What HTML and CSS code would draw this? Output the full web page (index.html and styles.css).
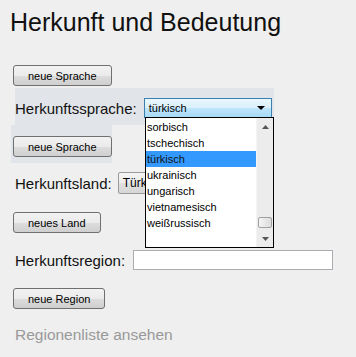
FILE: index.html
```html
<!DOCTYPE html>
<html lang="de">
<head>
    <meta charset="UTF-8">
    <meta name="viewport" content="width=device-width, initial-scale=1.0">
    <title>Herkunft und Bedeutung</title>
    <link rel="stylesheet" href="styles.css">
</head>
<body>
    <div class="page">
        <h1>Herkunft und Bedeutung</h1>

        <button class="btn btn-first">neue Sprache</button>

        <div class="row row-lang hl">
            <label class="lbl">Herkunftssprache:</label>
            <div class="select-box active">
                <span>türkisch</span>
                <svg class="arrow" width="8" height="4" viewBox="0 0 8 4"><polygon points="0,0 8,0 4,4" fill="#000"/></svg>
            </div>
        </div>

        <div class="btn-wrap hl">
            <button class="btn">neue Sprache</button>
        </div>

        <div class="row row-land">
            <label class="lbl">Herkunftsland:</label>
            <div class="select-box plain">
                <span>Türkei</span>
            </div>
        </div>

        <button class="btn btn-gap">neues Land</button>

        <div class="row row-region">
            <label class="lbl">Herkunftsregion:</label>
            <input type="text" class="text-input">
        </div>

        <button class="btn btn-gap">neue Region</button>

        <a href="#" class="list-link">Regionenliste ansehen</a>

        <!-- aufgeklappte Liste der Sprachen -->
        <div class="dropdown">
            <ul class="options">
                <li>sorbisch</li>
                <li>tschechisch</li>
                <li class="selected">türkisch</li>
                <li>ukrainisch</li>
                <li>ungarisch</li>
                <li>vietnamesisch</li>
                <li>weißrussisch</li>
            </ul>
            <div class="scrollbar">
                <div class="sb-up"><svg width="7" height="4" viewBox="0 0 7 4"><polygon points="0,4 7,4 3.5,0" fill="#555"/></svg></div>
                <div class="sb-track"><div class="sb-thumb"></div></div>
                <div class="sb-down"><svg width="7" height="4" viewBox="0 0 7 4"><polygon points="0,0 7,0 3.5,4" fill="#555"/></svg></div>
            </div>
        </div>
    </div>
</body>
</html>
```

FILE: styles.css
```css
* {
    margin: 0;
    padding: 0;
    box-sizing: border-box;
}

body {
    background-color: #efefef;
    color: #000;
    font-family: 'Liberation Sans', Arial, sans-serif;
}

.page {
    position: relative;
    display: flex;
    flex-direction: column;
    align-items: flex-start;
    padding-left: 13px;
    height: 357px;
}

h1 {
    font-size: 25px;
    font-weight: normal;
    line-height: 29px;
    margin: 8px 0 0 -3px;
    color: #111;
}

.btn {
    font-family: 'Liberation Sans', Tahoma, sans-serif;
    font-size: 11px;
    color: #000;
    height: 21px;
    padding: 0 14px;
    border: 1px solid #707070;
    border-radius: 3px;
    background: linear-gradient(to bottom, #f2f2f2 0%, #ebebeb 50%, #dddddd 51%, #cfcfcf 100%);
    cursor: pointer;
}

.btn-first {
    margin-top: 28px;
}

.btn-gap {
    margin-top: 18px;
}

.hl {
    background-color: #e1e5ea;
}

.row {
    display: flex;
    align-items: center;
}

.lbl {
    font-size: 15px;
    line-height: 17px;
    color: #111;
}

.row-lang {
    margin: 2px 0 0 2px;
    width: 259px;
    height: 37px;
    padding-top: 3px;
    gap: 7px;
}

.btn-wrap {
    margin-left: -2px;
    width: 101px;
    height: 38px;
    padding: 11px 0 0 2px;
}

.row-land {
    margin: 9px 0 0 2px;
    height: 22px;
    gap: 6px;
}

.row-region {
    margin: 17px 0 0 2px;
    height: 20px;
    gap: 8px;
}

.select-box {
    display: flex;
    align-items: center;
    justify-content: space-between;
    font-family: 'Liberation Sans', Tahoma, sans-serif;
    font-size: 11px;
}

.select-box.active {
    width: 128px;
    height: 20px;
    padding: 0 6px 0 4px;
    border: 1px solid #3c7fb1;
    background: linear-gradient(to bottom, #eaf6fd 0%, #d9f0fc 50%, #bee6fd 51%, #a7d9f5 100%);
}

.select-box.plain {
    width: 100px;
    height: 22px;
    padding: 0 4px;
    border: 1px solid #9a9a9a;
    border-radius: 2px;
    background: linear-gradient(to bottom, #f4f4f4 0%, #ececec 50%, #e0e0e0 51%, #d6d6d6 100%);
    font-size: 12px;
}

.text-input {
    width: 200px;
    height: 20px;
    border: 1px solid #abadb3;
    background-color: #fff;
}

.list-link {
    margin: 17px 0 0 2px;
    font-size: 15.5px;
    line-height: 18px;
    color: #999;
    text-decoration: none;
}

/* aufgeklappte Auswahlliste */
.dropdown {
    position: absolute;
    left: 145px;
    top: 117px;
    width: 129px;
    height: 131px;
    display: flex;
    border: 1px solid #000;
    background-color: #fff;
}

.options {
    flex: 1;
    list-style: none;
    padding-top: 1px;
    font-family: 'Liberation Sans', Tahoma, sans-serif;
    font-size: 11px;
}

.options li {
    height: 16px;
    line-height: 16px;
    padding-left: 1px;
}

.options li.selected {
    background-color: #3399ff;
    color: #111;
}

.scrollbar {
    width: 17px;
    display: flex;
    flex-direction: column;
    background-color: #ececec;
    border-left: 1px solid #f4f4f4;
}

.sb-up,
.sb-down {
    height: 17px;
    display: flex;
    align-items: center;
    justify-content: center;
}

.sb-track {
    flex: 1;
    display: flex;
    flex-direction: column;
    justify-content: flex-end;
    padding-bottom: 2px;
}

.sb-thumb {
    height: 11px;
    margin: 0 1px;
    border: 1px solid #a0a0a0;
    border-radius: 2px;
    background: linear-gradient(to right, #f4f4f4, #dcdcdc);
}
```
